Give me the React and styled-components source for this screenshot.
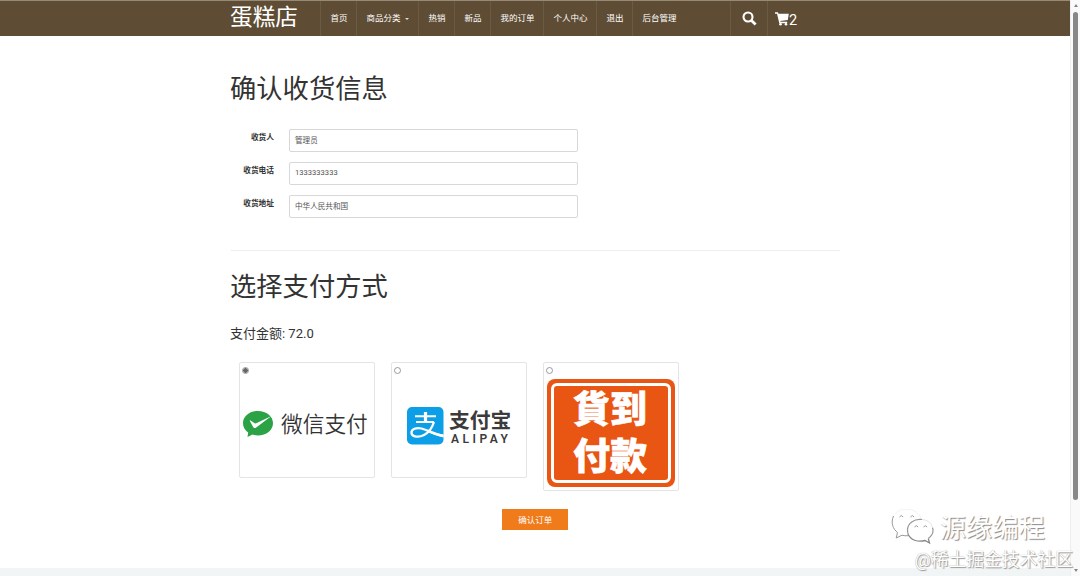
import React, { useState } from 'react'
import styled, { createGlobalStyle } from 'styled-components'

const GlobalStyle = createGlobalStyle`
  * {
    box-sizing: border-box;
  }

  body {
    background: #fff;
    color: #333;
    font-family: Roboto, 'Noto Sans CJK SC', sans-serif;
    font-size: 8.6px;
    margin: 0;
    overflow: hidden;
  }

  h1,
  h4 {
    font-weight: 400;
    margin: 0;
  }
`

const Window = styled.div`
  display: flex;
  height: 576px;
  overflow: hidden;
  position: relative;
  width: 1080px;
`

const Page = styled.div`
  display: flex;
  flex-direction: column;
  height: 576px;
  width: 1070px;
`

const Header = styled.header`
  background: #5e4c34;
  border-top: 1px solid #968976;
  color: #fff;
  display: flex;
  height: 36px;
  padding-left: 230px;
`

const Brand = styled.div`
  font-size: 22.7px;
  height: 35px;
  line-height: 34px;
  white-space: nowrap;
  width: 90px;
`

const NavItem = styled.a`
  align-items: center;
  border-left: 1px solid #6b5b42;
  display: flex;
  font-size: 8.5px;
  height: 35px;
  padding: 0 0 3px 9.5px;
  white-space: nowrap;
  width: ${({ $width }) => $width}px;
`

const Caret = styled.span`
  border-left: 2px solid transparent;
  border-right: 2px solid transparent;
  border-top: 2px solid #ddd;
  margin: 3px 0 0 4px;
`

const IconItem = styled.a`
  align-items: center;
  border-left: 1px solid #6b5b42;
  display: flex;
  font-size: 14.5px;
  height: 35px;
  padding-left: ${({ $pad }) => $pad}px;
  width: 37px;

  svg {
    flex: none;
  }
`

const CartCount = styled.span`
  line-height: 18px;
  margin-top: 4px;
`

const Main = styled.main`
  display: flex;
  flex: 1;
  flex-direction: column;
  padding: 33px 0 0 230px;
  width: 840px;
`

const Title = styled.h1`
  font-size: 26.3px;
  height: 40px;
  line-height: 40px;
  white-space: nowrap;
`

const Form = styled.form`
  border-bottom: 1px solid #eee;
  display: flex;
  flex-direction: column;
  gap: 10px;
  height: 123px;
  margin: 19px 0 16px 1px;
  padding-top: 1px;
`

const Field = styled.label`
  display: flex;
  height: 23.2px;
`

const FieldLabel = styled.span`
  font-size: 7.7px;
  font-weight: 700;
  line-height: 18px;
  padding-right: 15px;
  text-align: right;
  width: 58px;
`

const FieldInput = styled.input`
  background: #fff;
  border: 1px solid #d8d8d8;
  border-radius: 2px;
  color: #555;
  font-family: inherit;
  font-size: 7.6px;
  height: 23px;
  outline: none;
  padding: 0 5px 2px;
  width: 289px;
`

const Amount = styled.h4`
  font-size: 13px;
  height: 20px;
  line-height: 20px;
  margin-top: 17px;
`

const Payments = styled.div`
  align-items: flex-start;
  display: flex;
  gap: 15.5px;
  height: 129px;
  margin: 18px 0 0 8.5px;
`

const PaymentCard = styled.label`
  border: 1px solid #e4e4e4;
  border-radius: 2px;
  display: flex;
  flex-direction: column;
  height: ${({ $height }) => $height}px;
  width: 136.5px;
`

const Radio = styled.input`
  appearance: none;
  background: ${({ checked }) =>
    checked ? 'radial-gradient(#666 0 2px, #fff 2.7px)' : '#fff'};
  border: 1px solid #999;
  border-radius: 50%;
  flex: none;
  height: 7px;
  margin: 4px 0 0 2px;
  width: 7px;
`

const WechatLogo = styled.div`
  align-items: center;
  color: #333;
  display: flex;
  font-size: 21.7px;
  font-weight: 350;
  gap: 8.5px;
  line-height: 32px;
  margin: 33px 0 0 3px;
  white-space: nowrap;

  span {
    margin-top: 2px;
  }
`

const AlipayLogo = styled.div`
  display: flex;
  gap: 5.5px;
  margin: 33px 0 0 15px;
`

const AlipayName = styled.div`
  color: #3c3a3b;
  display: flex;
  flex-direction: column;
  font-size: 20.8px;
  font-weight: 700;
  line-height: 26px;
  padding-top: 1px;
  white-space: nowrap;
`

const AlipayLatin = styled.span`
  font-family: Roboto, sans-serif;
  font-size: 12px;
  font-weight: 600;
  letter-spacing: 3.5px;
  line-height: 10px;
  padding-left: 2px;
`

const CashFrame = styled.div`
  background: #e95513;
  border-radius: 8px;
  height: 108px;
  margin: 5px 0 0 3px;
  padding: 4px;
  width: 128px;
`

const CashSign = styled.div`
  align-items: center;
  border: 3px solid #fff;
  border-radius: 6px;
  color: #fff;
  display: flex;
  flex-direction: column;
  font-size: 37px;
  font-weight: 900;
  height: 100px;
  line-height: 47px;
  padding: 1px 1px 0 0;
  -webkit-text-stroke: 0.6px #fff;
`

const Submit = styled.button`
  background: #ef7b1a;
  border: 0;
  color: #fff;
  font-family: inherit;
  font-size: 8.5px;
  height: 21px;
  margin: 18px 0 0 272px;
  padding: 0 0 2px;
  width: 66.4px;
`

const Footer = styled.footer`
  background: #f2f5f5;
  height: 8px;
`

const Scrollbar = styled.div`
  align-items: center;
  background: #fafafa;
  border-left: 1px solid #eee;
  display: flex;
  flex-direction: column;
  height: 576px;
  width: 10px;
`

const ScrollArrow = styled.span`
  border-bottom: 3px solid #858585;
  border-left: 2.5px solid transparent;
  border-right: 2.5px solid transparent;
  margin-top: ${({ $down }) => ($down ? 69 : 4)}px;
  transform: ${({ $down }) => ($down ? 'rotate(180deg)' : 'none')};
`

const ScrollThumb = styled.span`
  background: #888;
  border-radius: 3px;
  height: 488px;
  margin-top: 5px;
  width: 5px;
`

const Watermark = styled.div`
  align-items: flex-end;
  bottom: 4px;
  color: #fff;
  display: flex;
  flex-direction: column;
  pointer-events: none;
  position: absolute;
  right: 7px;
  white-space: nowrap;
`

const Account = styled.div`
  align-items: center;
  display: flex;
  font-size: 26.4px;
  gap: 4px;
  line-height: 34px;
  margin-right: 28px;
  text-shadow: 1px 1px 1px #888;
`

const Community = styled.div`
  font-size: 17.8px;
  line-height: 25px;
  text-shadow: 0 0 1px #999, 1px 1px 1px #999;
`

const navItems = [
  { label: '首页', width: 36 },
  { label: '商品分类', width: 62, caret: true },
  { label: '热销', width: 36 },
  { label: '新品', width: 36 },
  { label: '我的订单', width: 53 },
  { label: '个人中心', width: 53 },
  { label: '退出', width: 36 },
  { label: '后台管理', width: 98 },
]

const fields = [
  { label: '收货人', value: '管理员' },
  { label: '收货电话', value: '1333333333' },
  { label: '收货地址', value: '中华人民共和国' },
]

const SearchIcon = () => (
  <svg width="15" height="15" viewBox="0 0 15 15" fill="none" stroke="#fff">
    <circle cx="6" cy="6" r="4.5" strokeWidth="2.1" />
    <path d="M9.2 9.2 13.6 13.6" strokeWidth="2.8" />
  </svg>
)

const CartIcon = () => (
  <svg width="14" height="14" viewBox="0 0 14 14" fill="#fff">
    <path d="M0 .3h2.9l.6 1.4h10.3L12.8 8 5.2 9l.3.8h6.7v1.4H4.3L2 1.7H0z" />
    <circle cx="5.5" cy="12.3" r="1.3" />
    <circle cx="11" cy="12.3" r="1.3" />
  </svg>
)

const WechatPayIcon = () => (
  <svg width="30" height="27" viewBox="0 0 30 27">
    <path
      d="M15 0C6.7 0 0 5.2 0 12.2c0 3.9 2 7.2 5.2 9.4L4.5 26l5-2.4c1.7.5 3.6.8 5.5.8 8.3 0 15-5.2 15-12.2S23.3 0 15 0Z"
      fill="#2ba245"
    />
    <path
      d="m7.2 9.2 4.5 3c.5.3 1 .3 1.5.1L28.5 5 12.9 16.7c-.9.7-2 .4-2.6-.5L6.7 9.8Z"
      fill="#fff"
    />
  </svg>
)

const AlipayIcon = () => (
  <svg width="37" height="38" viewBox="0 0 37 38">
    <rect width="36.5" height="37.5" rx="5" fill="#0c9fe8" />
    <g fill="none" stroke="#fff">
      <path d="M8 9.3h21M9 15h18" strokeWidth="2" />
      <path d="M18.5 5v10" strokeWidth="3.2" />
      <path
        d="M27 15c-2 6-5 10.5-10 13-5 2.7-12 2.2-12.5-2-.5-4 5-5.8 10-4.5 7 1.8 13 5.8 22 7.5"
        strokeWidth="2.3"
      />
    </g>
    <path d="M22 23.5c5 2.1 9 3.2 14.5 4v3c-6.5-1.6-11.5-3.2-16-5.5Z" fill="#fff" />
  </svg>
)

const ChatIcon = () => (
  <svg width="44" height="38" viewBox="0 0 44 38" fill="none">
    <path
      d="M2.5 7C-.5 14 2 20 6.5 23.5L5.2 29l5.8-2.800c2 .6 4 .8 6 .5"
      stroke="#999"
    />
    <path d="M4 5C10-3 27-1 30 10" stroke="#f2f2f2" />
    <path
      d="M17 25c2.5 6 9.5 8.5 17 6.5l4.5 2.5-1.2-4.5"
      stroke="#888"
      strokeWidth="1.3"
    />
    <path
      d="M31 10.500c-8-1-14.500 4-14.500 10.500 0 1.500.1 2.500.7 4M37.300 29.500c4-3 5.500-7 4.200-11"
      stroke="#999"
      strokeWidth="1.2"
    />
    <path d="M41.5 18.5C40 13 35.5 10.8 31 10.5" stroke="#e4e4e4" />
    <path
      d="M8.5 8q1.8-3 3.6 0M19.5 8q1.8-3 3.6 0M23.5 18q1.8-2.600 3.600 0M32.500 18q1.800-2.600 3.600 0"
      stroke="#999"
    />
  </svg>
)

const CheckoutForm = () => (
  <Form>
    {fields.map(({ label, value }) => (
      <Field key={label}>
        <FieldLabel>{label}</FieldLabel>
        <FieldInput defaultValue={value} />
      </Field>
    ))}
  </Form>
)

const PaymentOption = ({ children, height, onSelect, selected, type }) => (
  <PaymentCard $height={height}>
    <Radio
      checked={selected === type}
      name="payment"
      onChange={() => onSelect(type)}
      type="radio"
    />
    {children}
  </PaymentCard>
)

const App = () => {
  const [payment, setPayment] = useState('wechat')
  const optionProps = { selected: payment, onSelect: setPayment }

  return (
    <Window>
      <GlobalStyle />
      <Page>
        <Header>
          <Brand>蛋糕店</Brand>
          {navItems.map(({ label, width, caret }) => (
            <NavItem $width={width} key={label}>
              {label}
              {caret && <Caret />}
            </NavItem>
          ))}
          <IconItem $pad={11}>
            <SearchIcon />
          </IconItem>
          <IconItem $pad={7}>
            <CartIcon />
            <CartCount>2</CartCount>
          </IconItem>
        </Header>
        <Main>
          <Title>确认收货信息</Title>
          <CheckoutForm />
          <Title>选择支付方式</Title>
          <Amount>支付金额: 72.0</Amount>
          <Payments>
            <PaymentOption {...optionProps} height={116} type="wechat">
              <WechatLogo>
                <WechatPayIcon />
                <span>微信支付</span>
              </WechatLogo>
            </PaymentOption>
            <PaymentOption {...optionProps} height={116} type="alipay">
              <AlipayLogo>
                <AlipayIcon />
                <AlipayName>
                  支付宝
                  <AlipayLatin>ALIPAY</AlipayLatin>
                </AlipayName>
              </AlipayLogo>
            </PaymentOption>
            <PaymentOption {...optionProps} height={129} type="cash">
              <CashFrame>
                <CashSign>
                  <span>貨到</span>
                  <span>付款</span>
                </CashSign>
              </CashFrame>
            </PaymentOption>
          </Payments>
          <Submit type="button">确认订单</Submit>
        </Main>
        <Footer />
      </Page>
      <Scrollbar>
        <ScrollArrow />
        <ScrollThumb />
        <ScrollArrow $down />
      </Scrollbar>
      <Watermark>
        <Account>
          <ChatIcon />
          源缘编程
        </Account>
        <Community>@稀土掘金技术社区</Community>
      </Watermark>
    </Window>
  )
}

export default App
